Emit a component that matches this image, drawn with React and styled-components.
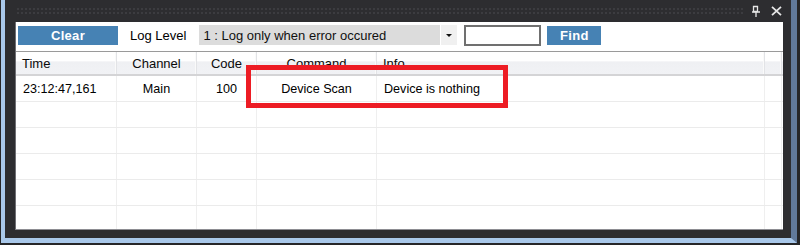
import styled, { createGlobalStyle } from 'styled-components';

const GlobalStyle = createGlobalStyle`
  html, body {
    margin: 0;
    padding: 0;
    background: #2b2b2e;
  }
  body {
    font-family: "Liberation Sans", Arial, sans-serif;
    font-size: 12px;
  }
`;

const Backdrop = styled.div`
  width: 800px;
  height: 245px;
  box-sizing: border-box;
  padding: 0 3px 2px 1px;
  background: #262628;
  overflow: hidden;
`;

const AeroFrame = styled.div`
  height: 100%;
  box-sizing: border-box;
  border-left: 4px solid #a9c8ea;
  border-bottom: 5px solid #a9c8ea;
  border-right: 6px solid #61799a;
  display: flex;
`;

const Dock = styled.div`
  flex: 1;
  display: flex;
  flex-direction: column;
  background: #2d2d30;
  padding: 0 8px 8px 10px;
`;

const TitleBar = styled.div`
  height: 22px;
  display: flex;
  align-items: center;
  gap: 6px;
  flex-shrink: 0;
`;

const Grip = styled.div`
  flex: 1;
  height: 8px;
  margin-left: 1px;
  background-image: radial-gradient(circle, #3c3c40 0.8px, transparent 1px);
  background-size: 4px 4px;
`;

const IconButton = styled.div`
  width: 14px;
  height: 14px;
  display: flex;
  align-items: center;
  justify-content: center;
`;

const Panel = styled.div`
  flex: 1;
  display: flex;
  flex-direction: column;
  background: #fff;
  border-left: 1px solid #6f6f74;
  border-bottom: 1px solid #8d8d92;
  min-height: 0;
`;

const Toolbar = styled.div`
  height: 29px;
  display: flex;
  align-items: center;
  padding: 0 0 3px 2px;
  flex-shrink: 0;
  box-sizing: border-box;
`;

const ActionButton = styled.div`
  width: ${p => p.$w}px;
  height: 19px;
  margin-right: ${p => p.$mr || 0}px;
  background: #4682b4;
  color: #fff;
  font-weight: bold;
  font-size: 13px;
  display: flex;
  align-items: center;
  justify-content: center;
  letter-spacing: 0.3px;
`;

const Label = styled.span`
  font-size: 13px;
  color: #000;
  margin-right: 13px;
`;

const Combo = styled.div`
  width: 258px;
  height: 20px;
  display: flex;
  margin-right: 7px;
`;

const ComboText = styled.div`
  flex: 1;
  background: #dcdcdc;
  font-size: 13px;
  display: flex;
  align-items: center;
  padding-left: 4px;
  color: #111;
`;

const ComboArrow = styled.div`
  width: 16px;
  background: #f0f0f0;
  margin-left: 1px;
  display: flex;
  align-items: center;
  justify-content: center;
  &::after {
    content: '';
    border-left: 3px solid transparent;
    border-right: 3px solid transparent;
    border-top: 3px solid #111;
  }
`;

const SearchBox = styled.div`
  width: 73px;
  height: 17px;
  border: 2px solid #707070;
  margin-right: 6px;
  background: #fff;
`;

const GridArea = styled.div`
  position: relative;
  flex: 1;
  border-top: 1px solid #9a9a9a;
  overflow: hidden;
`;

const COLS = '101px 80px 60px 120px 388px 17px';

const HeaderRow = styled.div`
  display: grid;
  grid-template-columns: ${COLS};
  height: 22px;
  border-bottom: 2px solid #d4d4d6;
  background: linear-gradient(#ffffff 0%, #ffffff 40%, #eff0f3 45%, #f1f2f5 100%);
`;

const HeaderCell = styled.div`
  display: flex;
  align-items: center;
  justify-content: ${p => (p.$align === 'left' ? 'flex-start' : 'center')};
  padding-left: ${p => (p.$align === 'left' ? '6px' : '0')};
  border-right: 1px solid #e2e3e6;
  box-shadow: inset -1px 0 0 #fafafa;
  font-size: 13px;
  color: #0a0a0a;
`;

const Row = styled.div`
  display: grid;
  grid-template-columns: ${COLS};
  height: 25px;
  border-bottom: 1px solid #ebebeb;
`;

const Cell = styled.div`
  display: flex;
  align-items: center;
  justify-content: ${p => (p.$align === 'left' ? 'flex-start' : 'center')};
  padding-left: ${p => (p.$align === 'left' ? '7px' : '0')};
  border-right: 1px solid #efefef;
  font-size: 12.6px;
  color: #000;
`;

const Highlight = styled.div`
  position: absolute;
  left: 230px;
  top: 13px;
  width: 252px;
  height: 33px;
  border: 5px solid #ed1c24;
  pointer-events: none;
`;

const columns = [
  { title: 'Time', align: 'left' },
  { title: 'Channel' },
  { title: 'Code' },
  { title: 'Command' },
  { title: 'Info', align: 'left' },
  { title: '' },
];

const rows = [
  ['23:12:47,161', 'Main', '100', 'Device Scan', 'Device is nothing', ''],
  ['', '', '', '', '', ''],
  ['', '', '', '', '', ''],
  ['', '', '', '', '', ''],
  ['', '', '', '', '', ''],
  ['', '', '', '', '', ''],
];

const PinIcon = () => (
  <svg width="10" height="12" viewBox="0 0 10 12">
    <path d="M2.5 1.5h4v5h-4z" fill="none" stroke="#e6e6e6" strokeWidth="1.3" />
    <path d="M1 7h8M5 7v5" stroke="#e6e6e6" strokeWidth="1.3" />
  </svg>
);

const CloseIcon = () => (
  <svg width="11" height="10" viewBox="0 0 11 10">
    <path d="M1 0.8l9 8.4M10 0.8l-9 8.4" stroke="#e6e6e6" strokeWidth="1.8" />
  </svg>
);

export default function App() {
  return (
    <>
      <GlobalStyle />
      <Backdrop>
        <AeroFrame>
          <Dock>
            <TitleBar>
              <Grip />
              <IconButton>
                <PinIcon />
              </IconButton>
              <IconButton>
                <CloseIcon />
              </IconButton>
            </TitleBar>
            <Panel>
              <Toolbar>
                <ActionButton $w={100} $mr={12}>Clear</ActionButton>
                <Label>Log Level</Label>
                <Combo>
                  <ComboText>1 : Log only when error occured</ComboText>
                  <ComboArrow />
                </Combo>
                <SearchBox />
                <ActionButton $w={54}>Find</ActionButton>
              </Toolbar>
              <GridArea>
                <HeaderRow>
                  {columns.map((c, i) => (
                    <HeaderCell key={i} $align={c.align}>
                      {c.title}
                    </HeaderCell>
                  ))}
                </HeaderRow>
                {rows.map((r, ri) => (
                  <Row key={ri}>
                    {r.map((v, ci) => (
                      <Cell key={ci} $align={columns[ci].align}>
                        {v}
                      </Cell>
                    ))}
                  </Row>
                ))}
                <Highlight />
              </GridArea>
            </Panel>
          </Dock>
        </AeroFrame>
      </Backdrop>
    </>
  );
}
